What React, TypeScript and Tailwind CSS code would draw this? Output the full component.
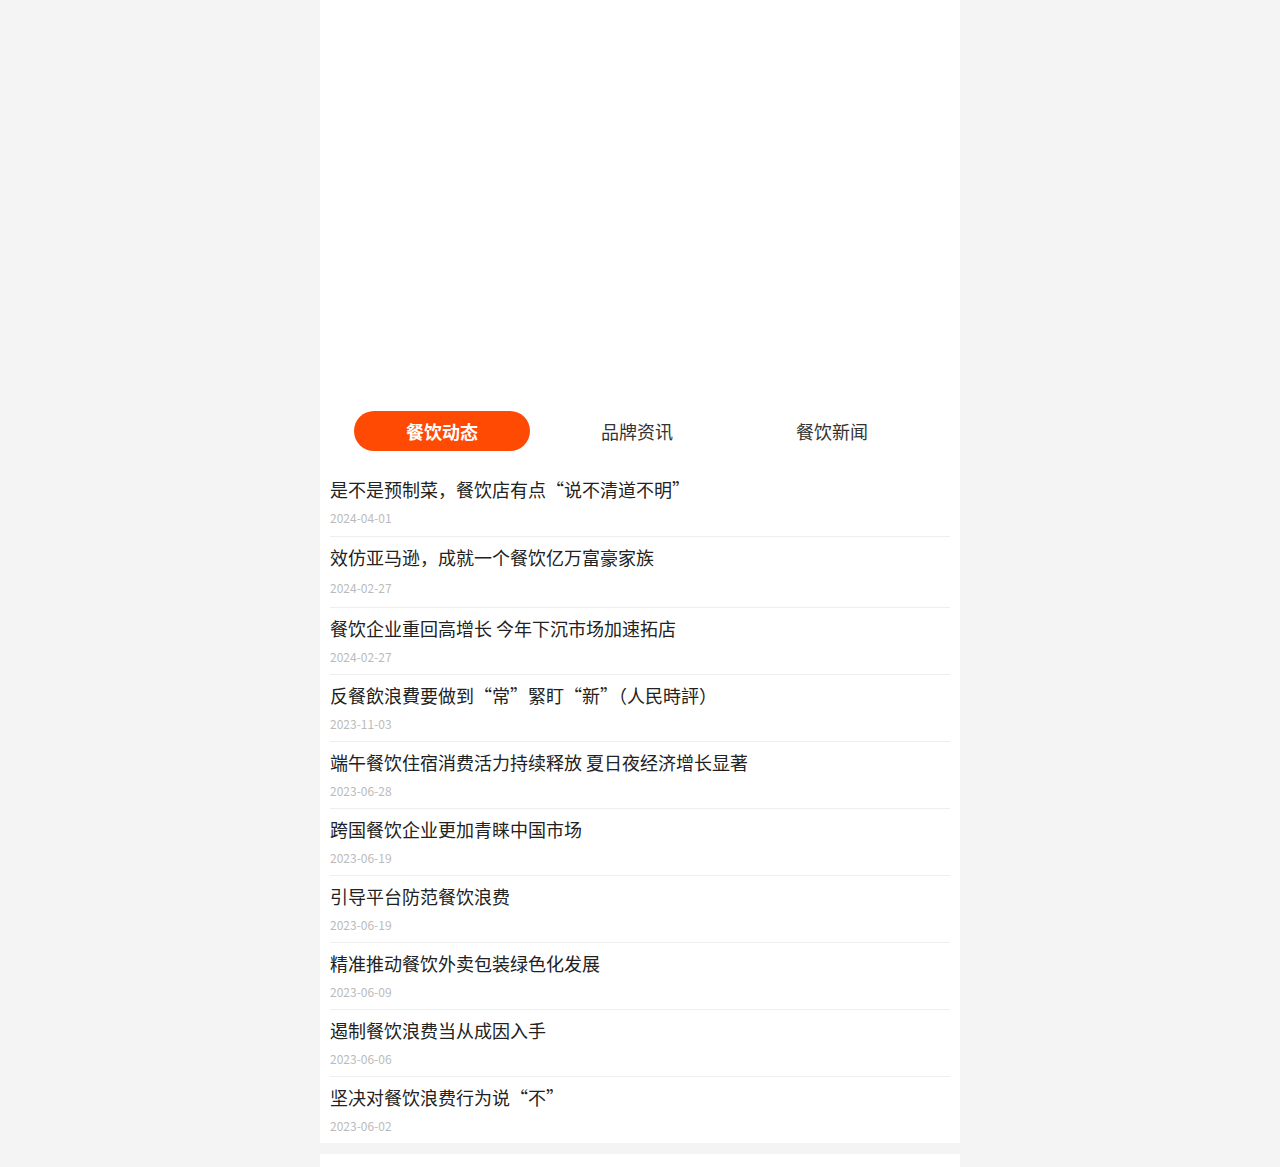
import { useState } from 'react';

const TABS = ['餐饮动态', '品牌资讯', '餐饮新闻'];

const NEWS = [
  { title: '是不是预制菜，餐饮店有点“说不清道不明”', date: '2024-04-01' },
  { title: '效仿亚马逊，成就一个餐饮亿万富豪家族', date: '2024-02-27' },
  { title: '餐饮企业重回高增长 今年下沉市场加速拓店', date: '2024-02-27' },
  { title: '反餐飲浪費要做到“常”緊盯“新”（人民時評）', date: '2023-11-03' },
  { title: '端午餐饮住宿消费活力持续释放 夏日夜经济增长显著', date: '2023-06-28' },
  { title: '跨国餐饮企业更加青睐中国市场', date: '2023-06-19' },
  { title: '引导平台防范餐饮浪费', date: '2023-06-19' },
  { title: '精准推动餐饮外卖包装绿色化发展', date: '2023-06-09' },
  { title: '遏制餐饮浪费当从成因入手', date: '2023-06-06' },
  { title: '坚决对餐饮浪费行为说“不”', date: '2023-06-02' },
];

export default function App() {
  const [active, setActive] = useState(0);

  return (
    <div
      className="min-h-[1167px] bg-[#f4f4f4]"
      style={{ fontFamily: '"Microsoft YaHei", "Noto Sans CJK SC", "Noto Sans", sans-serif' }}
    >
      <div className="mx-auto w-[640px] bg-white">
        {/* 배너 영역 (이미지 없음) */}
        <div className="h-[411px]" />

        <div className="flex gap-[19px] pl-[34px]">
          {TABS.map((tab, i) => (
            <button
              key={tab}
              type="button"
              onClick={() => setActive(i)}
              className={
                i === active
                  ? 'h-[40px] w-[176px] rounded-full bg-[#ff4a03] text-[18px] font-bold text-white'
                  : 'h-[40px] w-[176px] rounded-full text-[18px] text-[#333]'
              }
            >
              {tab}
            </button>
          ))}
        </div>

        <ul className="mt-[18px] px-[10px]">
          {NEWS.map((item, i) => (
            <li
              key={i}
              className={
                i === NEWS.length - 1
                  ? 'pt-[8px] pb-[7px]'
                  : i === 0
                    ? 'border-b border-[#eeeeee] pt-[8px] pb-[8px]'
                    : i === 1
                      ? 'border-b border-[#eeeeee] pt-[8px] pb-[9px]'
                      : 'border-b border-[#eeeeee] pt-[8px] pb-[7px]'
              }
            >
              <p className="text-[18px] leading-[24px] text-[#222]">{item.title}</p>
              <p
                className={
                  i === 1
                    ? 'mt-[9px] text-[12px] leading-[20px] text-[#bbb]'
                    : 'mt-[7px] text-[12px] leading-[20px] text-[#bbb]'
                }
              >
                {item.date}
              </p>
            </li>
          ))}
        </ul>
      </div>

      <div className="mx-auto mt-[11px] h-[14px] w-[640px] bg-white" />
    </div>
  );
}
